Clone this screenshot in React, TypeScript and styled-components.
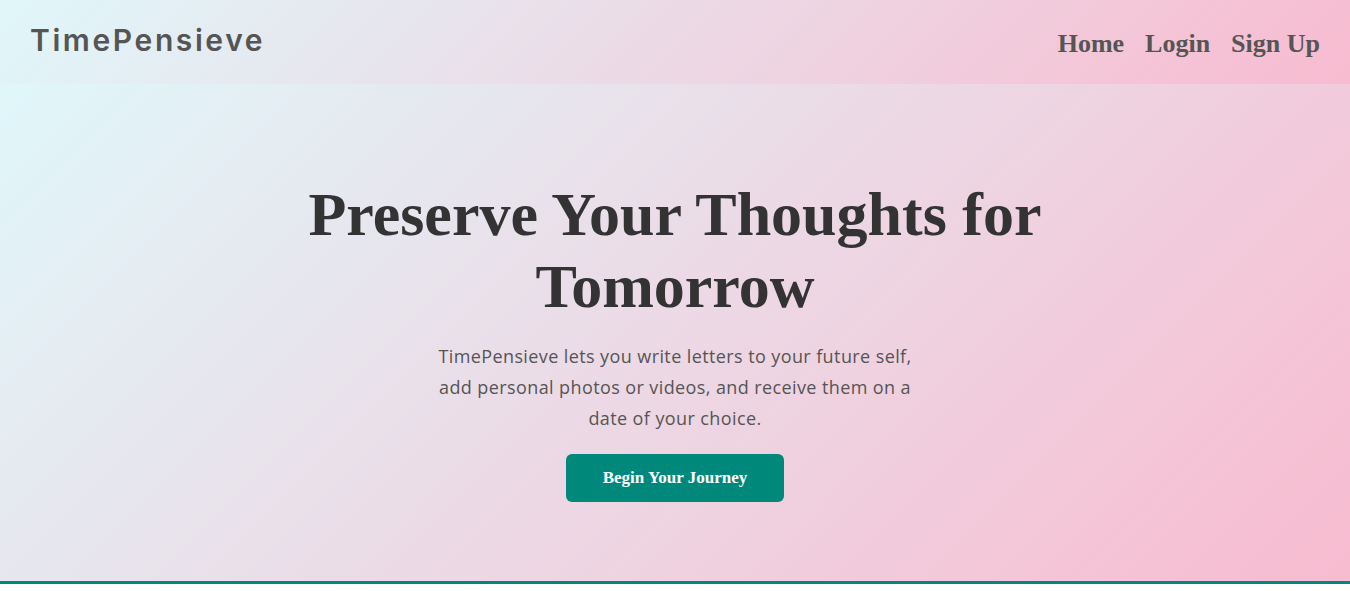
import styled, { createGlobalStyle } from 'styled-components';

const GlobalStyle = createGlobalStyle`
  * { box-sizing: border-box; }
  body {
    margin: 0;
    background: #ffffff;
    font-family: "Open Sans", "Noto Sans", sans-serif;
  }
`;

const serif = `"Liberation Serif", "DejaVu Serif", serif`;
const sans = `"Open Sans", "Noto Sans", sans-serif`;

const Header = styled.header`
  height: 84px;
  display: flex;
  align-items: center;
  justify-content: space-between;
  padding: 0 30px 4px 30px;
  background: linear-gradient(135deg, #e0f7fa 0%, #f8bbd0 100%);
`;

const Logo = styled.div`
  font-family: "Inter", ${sans};
  font-size: 30px;
  font-weight: 600;
  letter-spacing: 2.6px;
  color: #555555;
`;

const Nav = styled.nav`
  display: flex;
  gap: 21px;
  padding-top: 8px;
`;

const NavLink = styled.a`
  font-family: ${serif};
  font-size: 26px;
  font-weight: 700;
  color: #555555;
  text-decoration: none;
  cursor: pointer;
`;

const Hero = styled.section`
  height: 497px;
  display: flex;
  flex-direction: column;
  align-items: center;
  padding-top: 94px;
  text-align: center;
  background: linear-gradient(135deg, #e0f7fa 0%, #f8bbd0 100%);
`;

const Title = styled.h1`
  margin: 0 0 19px 0;
  font-family: ${serif};
  font-size: 62px;
  line-height: 72px;
  font-weight: 700;
  color: #333333;
  max-width: 800px;
`;

const Lead = styled.p`
  margin: 0 0 20px 0;
  max-width: 495px;
  font-family: ${sans};
  font-size: 18px;
  letter-spacing: 0.4px;
  line-height: 31px;
  color: #555555;
`;

const CtaButton = styled.button`
  height: 48px;
  padding: 0 37px;
  border: none;
  border-radius: 6px;
  background: #00897b;
  color: #ffffff;
  font-family: ${serif};
  font-size: 17px;
  font-weight: 700;
  cursor: pointer;
`;

const Footer = styled.footer`
  height: 60px;
  border-top: 3px solid #00897b;
  background: #ffffff;
`;

export default function App() {
  return (
    <>
      <GlobalStyle />
      <Header>
        <Logo>TimePensieve</Logo>
        <Nav>
          <NavLink>Home</NavLink>
          <NavLink>Login</NavLink>
          <NavLink>Sign Up</NavLink>
        </Nav>
      </Header>
      <Hero>
        <Title>Preserve Your Thoughts for Tomorrow</Title>
        <Lead>
          TimePensieve lets you write letters to your future self, add personal photos or videos, and
          receive them on a date of your choice.
        </Lead>
        <CtaButton>Begin Your Journey</CtaButton>
      </Hero>
      <Footer />
    </>
  );
}
